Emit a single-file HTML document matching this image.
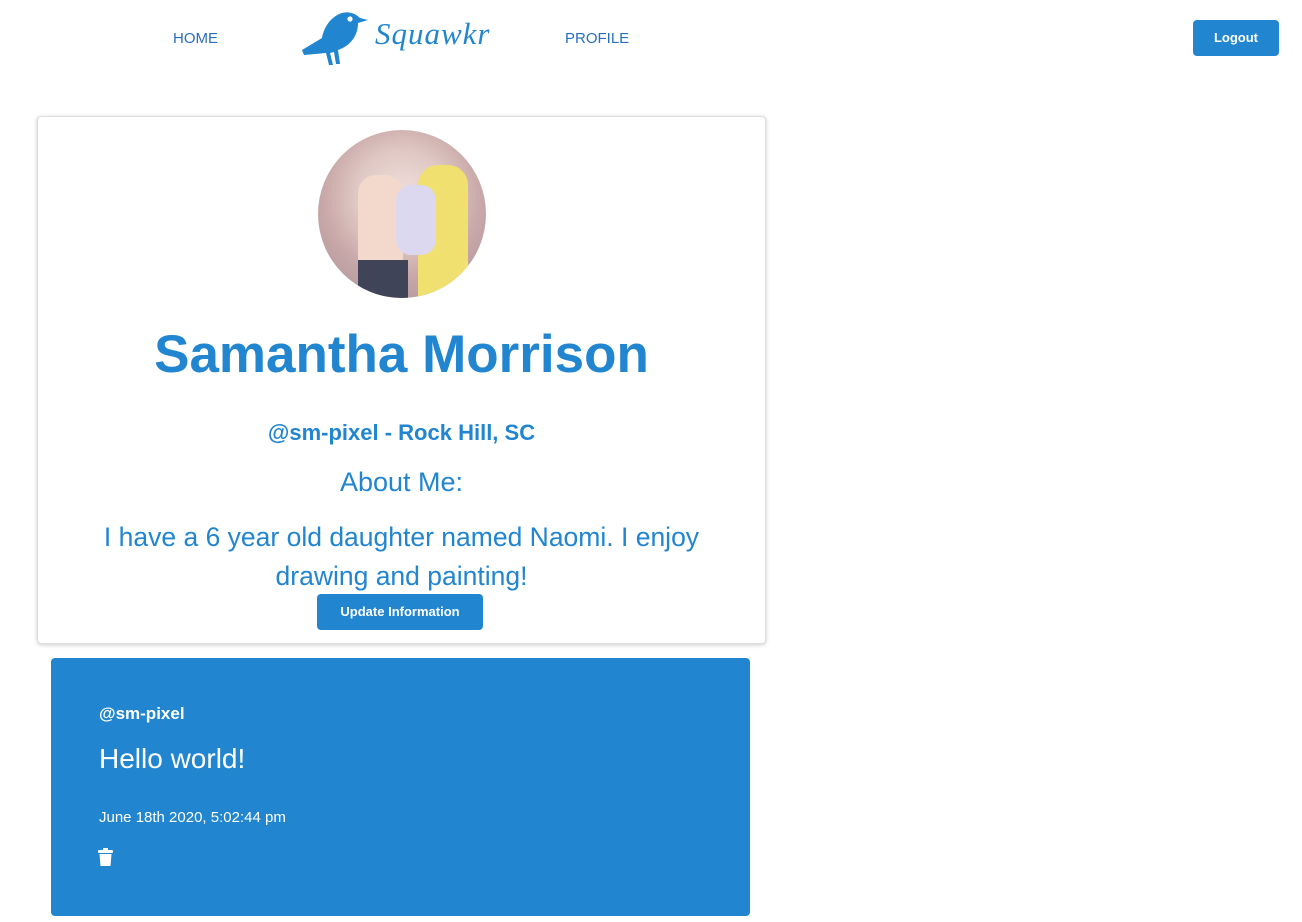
<!DOCTYPE html>
<html><head><meta charset="utf-8"><style>
body{margin:0;background:#fff;font-family:"Liberation Sans",sans-serif;width:1302px;height:922px;overflow:hidden;position:relative;color:#2185d0}
.nav{position:absolute;font-size:15px;top:30px;color:#2a6fbe}
.btn{position:absolute;background:#2185d0;color:#fff;font-weight:bold;font-size:13px;border-radius:4px;text-align:center}
.card{position:absolute;left:37px;top:116px;width:727px;height:526px;border:1px solid #ddd;border-radius:4px;box-shadow:0 1px 4px rgba(0,0,0,.2);background:#fff}
.c{position:absolute;left:0;width:100%;text-align:center}
.post{position:absolute;left:51px;top:658px;width:699px;height:258px;background:#2185d0;border-radius:4px;color:#fff}
</style></head><body>
<div class="nav" style="left:173px">HOME</div>
<div class="nav" style="left:565px">PROFILE</div>
<svg style="position:absolute;left:300px;top:8px" width="75" height="58" viewBox="0 0 75 58">
<path d="M2 42 L22 30 C24 18 32 8 42 5 C50 3 56 6 60 10 L68 12 L58 15 C58 28 50 38 38 42 L40 56 L36 56 L34 44 L30 45 L33 57 L29 57 L26 45 L4 47 Z" fill="#2185d0"/>
<circle cx="50" cy="11" r="2.6" fill="#fff"/>
</svg>
<div style="position:absolute;left:375px;top:16px;font-size:31px;font-style:italic;font-family:'Liberation Serif',serif;color:#2185d0;letter-spacing:1px">Squawkr</div>
<div class="btn" style="left:1193px;top:20px;width:86px;height:36px;line-height:36px">Logout</div>
<div class="card">
<div style="position:absolute;left:280px;top:13px;width:168px;height:168px;border-radius:50%;overflow:hidden;background:radial-gradient(circle at 50% 40%,#f0e0dc 0,#e0c8c4 35%,#c8a8a8 60%,#a8909a 100%)">
<div style="position:absolute;left:100px;top:35px;width:50px;height:133px;background:#f0e070;border-radius:20px 20px 0 0"></div>
<div style="position:absolute;left:40px;top:45px;width:45px;height:123px;background:#f3d8cc;border-radius:18px 18px 0 0"></div>
<div style="position:absolute;left:40px;top:130px;width:50px;height:40px;background:#404458"></div>
<div style="position:absolute;left:78px;top:55px;width:40px;height:70px;background:#dcd8f0;border-radius:15px"></div>
</div>
<div class="c" style="top:207px;font-size:53px;font-weight:bold">Samantha Morrison</div>
<div class="c" style="top:303px;font-size:22px;font-weight:bold">@sm-pixel - Rock Hill, SC</div>
<div class="c" style="top:350px;font-size:27px">About Me:</div>
<div class="c" style="top:401px;font-size:26.5px;line-height:39px;padding:0 20px;box-sizing:border-box">I have a 6 year old daughter named Naomi. I enjoy drawing and painting!</div>
<div class="btn" style="left:279px;top:477px;width:166px;height:36px;line-height:36px">Update Information</div>
</div>
<div class="post">
<div style="position:absolute;left:48px;top:46px;font-size:17px;font-weight:bold">@sm-pixel</div>
<div style="position:absolute;left:48px;top:85px;font-size:28px">Hello world!</div>
<div style="position:absolute;left:48px;top:151px;font-size:15px">June 18th 2020, 5:02:44 pm</div>
<svg style="position:absolute;left:47px;top:190px" width="15" height="18" viewBox="0 0 15 18"><rect x="0" y="2" width="15" height="3" rx="1" fill="#fff"/><rect x="5" y="0" width="5" height="3" fill="#fff"/><path d="M1.5 6 H13.5 L12.5 18 H2.5 Z" fill="#fff"/></svg>
</div>
</body></html>
